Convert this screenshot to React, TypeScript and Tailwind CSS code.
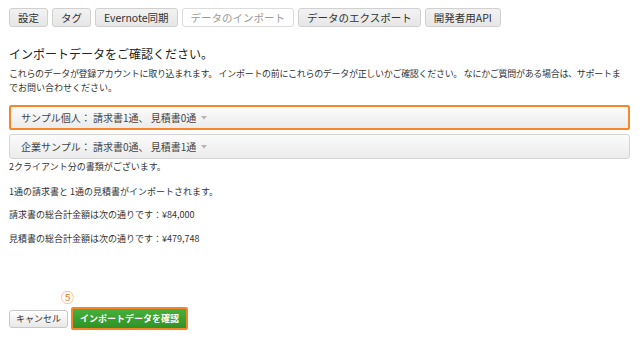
const tabs = [
  { label: "設定" },
  { label: "タグ" },
  { label: "Evernote同期" },
  { label: "データのインポート", active: true },
  { label: "データのエクスポート" },
  { label: "開発者用API" },
];

const Caret = () => (
  <svg width="6" height="4" viewBox="0 0 6 4" className="ml-[5px] inline-block">
    <path d="M0 0 L6 0 L3 3.5 Z" fill="#b5b5b5" />
  </svg>
);

const App = () => {
  return (
    <div
      className="w-[640px] h-[340px] bg-white text-[#333] overflow-hidden pl-[9px] pr-[10px] pt-2"
      style={{ fontFamily: '"Noto Sans CJK JP", "Liberation Sans", sans-serif' }}
    >
      {/* tabs */}
      <div className="flex gap-[4px]">
        {tabs.map((t) => (
          <div
            key={t.label}
            className={
              t.active
                ? "h-[19px] px-[8px] flex items-center text-[10.5px] text-[#9a9a9a] bg-white border border-[#dcdcdc] rounded-[3px]"
                : "h-[19px] px-[8px] flex items-center text-[10.5px] text-[#333] bg-gradient-to-b from-[#f2f2f2] to-[#e6e6e6] border border-[#d0d0d0] rounded-[3px]"
            }
          >
            {t.label}
          </div>
        ))}
      </div>

      <h2 className="mt-[19px] text-[12px] leading-[16px] text-[#222]">インポートデータをご確認ください。</h2>
      <p className="mt-[5px] text-[9px] leading-[14px] text-[#333]">
        <span className="whitespace-nowrap tracking-[-0.3px]">
          これらのデータが登録アカウントに取り込まれます。 インポートの前にこれらのデータが正しいかご確認ください。 なにかご質問がある場合は、サポートま
        </span>
        <br />
        でお問い合わせください。
      </p>

      {/* dropdowns */}
      <div className="mt-[10px] h-[25px] flex items-center px-[10px] text-[10px] text-[#444] bg-gradient-to-b from-[#fbfbfb] to-[#ebebeb] border-2 border-[#f7852a] rounded-[2px]">
        サンプル個人： 請求書1通、 見積書0通
        <Caret />
      </div>
      <div className="mt-[4px] h-[25px] flex items-center px-[11px] text-[10px] text-[#444] bg-gradient-to-b from-[#fbfbfb] to-[#ebebeb] border border-[#d4d4d4] rounded-[3px]">
        企業サンプル： 請求書0通、 見積書1通
        <Caret />
      </div>

      <div className="text-[9px] leading-[14px] text-[#333]">
        <p className="mt-[1px]">2クライアント分の書類がございます。</p>
        <p className="mt-[11px]">1通の請求書と 1通の見積書がインポートされます。</p>
        <p className="mt-[9px]">請求書の総合計金額は次の通りです：¥84,000</p>
        <p className="mt-[10px]">見積書の総合計金額は次の通りです：¥479,748</p>
      </div>

      <div className="mt-[44px] ml-[52px] h-[13px] text-[13px] leading-[13px] text-[#f7852a]">⑤</div>

      <div className="mt-[4px] flex items-center gap-[3px]">
        <div className="h-[18px] px-[6px] flex items-center text-[9px] text-[#333] bg-gradient-to-b from-[#ffffff] to-[#e8e8e8] border border-[#c8c8c8] rounded-[3px]">
          キャンセル
        </div>
        <div className="border-2 border-[#f7852a] rounded-[2px]">
          <div className="h-[19px] px-[7px] flex items-center text-[9px] font-bold text-white bg-gradient-to-b from-[#47b03a] to-[#2f9226]">
            インポートデータを確認
          </div>
        </div>
      </div>
    </div>
  );
};

export default App;
